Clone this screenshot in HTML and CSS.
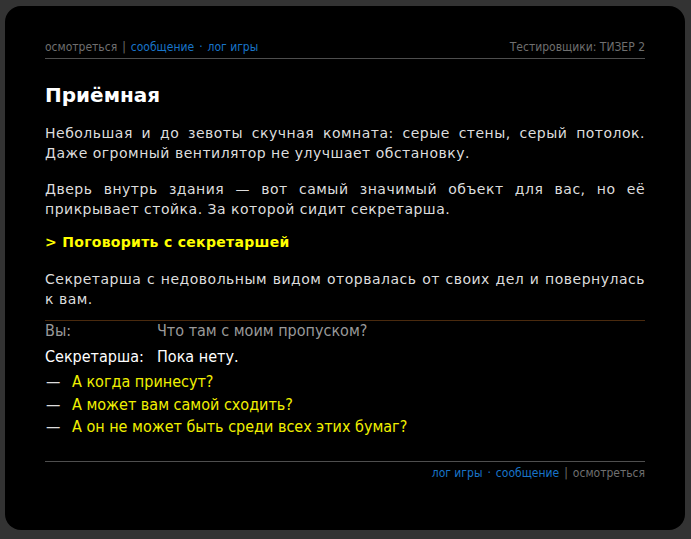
FILE: index.html
```html
<!DOCTYPE html>
<html lang="ru">
<head>
<meta charset="utf-8">
<title>Приёмная</title>
<link rel="stylesheet" href="styles.css">
</head>
<body>
<div class="frame">
  <div class="bar bar-top">
    <div class="nav">
      <span class="muted">осмотреться</span><span class="sep">|</span><a class="link" href="#">сообщение</a><span class="dot">·</span><a class="link" href="#">лог игры</a>
    </div>
    <div class="muted">Тестировщики: ТИЗЕР 2</div>
  </div>

  <h1 class="title">Приёмная</h1>

  <p class="text">Небольшая и до зевоты скучная комната: серые стены, серый потолок. Даже огромный вентилятор не улучшает обстановку.</p>
  <p class="text text-tight">Дверь внутрь здания — вот самый значимый объект для вас, но её прикрывает стойка. За которой сидит секретарша.</p>

  <p class="action">&gt; Поговорить с секретаршей</p>

  <p class="text text-last">Секретарша с недовольным видом оторвалась от своих дел и повернулась к вам.</p>

  <div class="dialog">
    <div class="line line-past"><span class="who">Вы:</span><span class="say">Что там с моим пропуском?</span></div>
    <div class="line line-now"><span class="who">Секретарша:</span><span class="say">Пока нету.</span></div>
    <ul class="choices">
      <li><span class="dash">—</span><a href="#">А когда принесут?</a></li>
      <li><span class="dash">—</span><a href="#">А может вам самой сходить?</a></li>
      <li><span class="dash">—</span><a href="#">А он не может быть среди всех этих бумаг?</a></li>
    </ul>
  </div>

  <div class="bar bar-bottom">
    <div class="nav">
      <a class="link" href="#">лог игры</a><span class="dot">·</span><a class="link" href="#">сообщение</a><span class="sep">|</span><span class="muted">осмотреться</span>
    </div>
  </div>
</div>
</body>
</html>
```

FILE: styles.css
```css
html, body {
  margin: 0;
  background: #333333;
}

.frame {
  margin: 6px 6px 9px 5px;
  height: 524px;
  box-sizing: border-box;
  background: #000;
  border-radius: 16px;
  padding: 34px 40px 0 40px;
  font-family: "DejaVu Sans", Verdana, sans-serif;
  color: #dddddd;
}

/* top and bottom navigation strips */
.bar {
  display: flex;
  justify-content: space-between;
  font-family: "DejaVu Sans Condensed", "DejaVu Sans", Tahoma, sans-serif;
  font-size: 12px;
  line-height: 15px;
}

.bar-top {
  padding-bottom: 3px;
  border-bottom: 1px solid #4e4e4e;
}

.bar-bottom {
  margin-top: 22px;
  padding-top: 4px;
  border-top: 1px solid #4e4e4e;
  justify-content: flex-end;
}

.muted { color: #6f6f6f; }
.link { color: #1874c8; text-decoration: none; }
.sep { color: #6f6f6f; margin: 0 5px; }
.dot { color: #1874c8; margin: 0 5px; }

.title {
  margin: 24px 0 16px;
  font-size: 20px;
  line-height: 24px;
  font-weight: bold;
  color: #ffffff;
}

.text {
  margin: 0 0 16px;
  font-size: 14px;
  line-height: 20px;
  letter-spacing: 0.5px;
  text-align: justify;
}

.text-tight { margin-bottom: 13px; }
.text-last { margin-bottom: 11px; }

.action {
  margin: 0 0 17px;
  font-size: 14px;
  line-height: 20px;
  letter-spacing: 0.3px;
  font-weight: bold;
  color: #ffff00;
}

/* conversation block */
.dialog {
  border-top: 1px solid #4a2a0e;
  font-family: "DejaVu Sans Condensed", "DejaVu Sans", Tahoma, sans-serif;
  font-size: 16px;
}

.line {
  display: flex;
  line-height: 19px;
}

.line-past { color: #999999; margin-bottom: 7px; }
.line-now { color: #ffffff; margin-bottom: 5px; }

.who { width: 112px; flex: none; }

.choices {
  list-style: none;
  margin: 0;
  padding: 0;
}

.choices li {
  display: flex;
  line-height: 22.5px;
  color: #dddddd;
}

.dash { width: 26px; flex: none; padding-left: 1px; }

.choices a {
  color: #f0f000;
  text-decoration: none;
}
```
